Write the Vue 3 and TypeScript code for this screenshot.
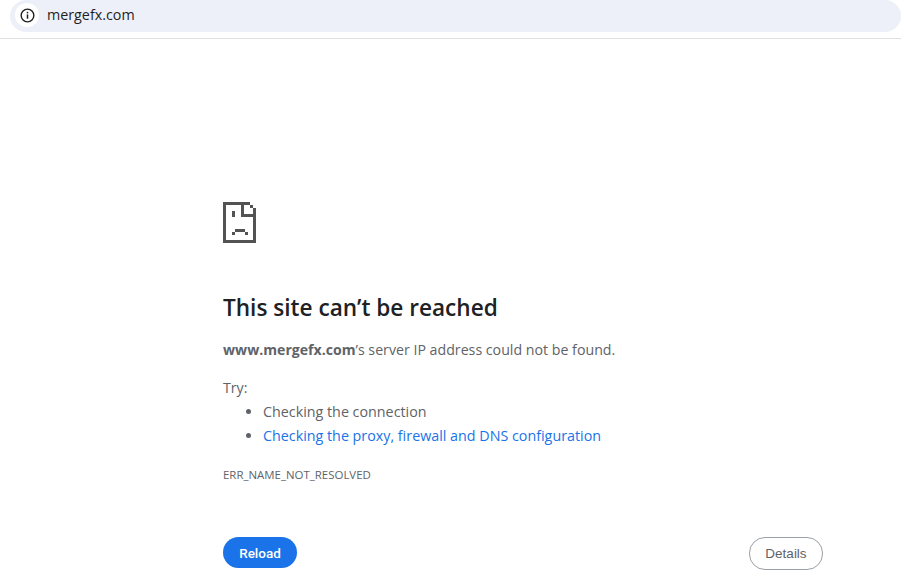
<script setup lang="ts">
const tips: { text: string; link: boolean }[] = [
  { text: 'Checking the connection', link: false },
  { text: 'Checking the proxy, firewall and DNS configuration', link: true },
]
</script>

<template>
  <div class="page">
    <header class="toolbar">
      <div class="omnibox">
        <span class="chip">
          <svg width="15" height="15" viewBox="0 0 14 14" fill="none">
            <circle cx="7" cy="7" r="5.9" stroke="#1f1f1f" stroke-width="1.3" />
            <rect x="6.3" y="6" width="1.4" height="4" fill="#1f1f1f" />
            <rect x="6.3" y="3.6" width="1.4" height="1.4" fill="#1f1f1f" />
          </svg>
        </span>
        <span class="url">mergefx.com</span>
      </div>
    </header>
    <main class="content">
      <svg class="icon" width="33" height="41" viewBox="0 0 33 41" shape-rendering="crispEdges" fill="#535353">
        <path d="M0 0h27v3h3v3h3v35H0zM3 3v35h27V15H18V3zM21 3v9h9V6h-3V3z" fill-rule="evenodd" />
        <rect x="9" y="9" width="3" height="6" />
        <path d="M9 30h3v-3h10v3h3v3h-3v-3H12v3H9z" />
      </svg>
      <h1 class="title">This site can’t be reached</h1>
      <p class="summary"><strong>www.mergefx.com</strong>’s server IP address could not be found.</p>
      <p class="try">Try:</p>
      <ul class="tips">
        <li v-for="tip in tips" :key="tip.text"><span :class="{ link: tip.link }">{{ tip.text }}</span></li>
      </ul>
      <div class="code">ERR_NAME_NOT_RESOLVED</div>
      <div class="actions">
        <button class="reload">Reload</button>
        <button class="details">Details</button>
      </div>
    </main>
  </div>
</template>

<style>
html, body { margin: 0; background: #fff; overflow: hidden; }
</style>

<style scoped>
.page {
  height: 575px;
  overflow: hidden;
  font-family: "Open Sans", "Noto Sans", sans-serif;
  color: #5f6368;
}
.toolbar {
  height: 38px;
  border-bottom: 1px solid #e0e0e0;
  padding-left: 10px;
}
.omnibox {
  height: 32px;
  background: #edf0f8;
  border-radius: 16px;
  display: flex;
  align-items: center;
  gap: 8px;
  padding-left: 5px;
}
.chip {
  width: 24px;
  height: 24px;
  margin-top: -2px;
  border-radius: 50%;
  background: #fff;
  display: flex;
  align-items: center;
  justify-content: center;
}
.url {
  font-size: 14.3px;
  color: #1f1f1f;
  margin-top: -3px;
}
.content {
  width: 600px;
  margin-left: 223px;
  padding-top: 163px;
}
.icon { display: block; }
.title {
  margin: 49px 0 0;
  font-size: 22.6px;
  line-height: 32px;
  font-weight: 600;
  color: #202124;
}
.summary {
  margin: 14px 0 0;
  font-size: 14.2px;
  line-height: 24px;
}
.summary strong { font-weight: 700; font-size: 14.1px; }
.try {
  margin: 14px 0 0;
  font-size: 14.2px;
  line-height: 24px;
}
.tips {
  margin: 0;
  padding-left: 40px;
  font-size: 14.3px;
  line-height: 24px;
}
.link { color: #1a73e8; }
.code {
  margin-top: 19px;
  font-size: 11.45px;
  line-height: 16px;
}
.actions {
  margin-top: 54px;
  display: flex;
  justify-content: space-between;
  align-items: flex-start;
}
button {
  font-size: 13.5px;
  border-radius: 16px;
  height: 31px;
  padding: 0;
}
.reload {
  width: 74px;
  font-family: "Roboto", sans-serif;
  background: #1a73e8;
  color: #fff;
  border: none;
  font-weight: 500;
}
.details {
  width: 74px;
  height: 33px;
  font-family: "Liberation Sans", sans-serif;
  background: #fff;
  color: #5f6368;
  border: 1px solid #9aa0a6;
}
</style>
